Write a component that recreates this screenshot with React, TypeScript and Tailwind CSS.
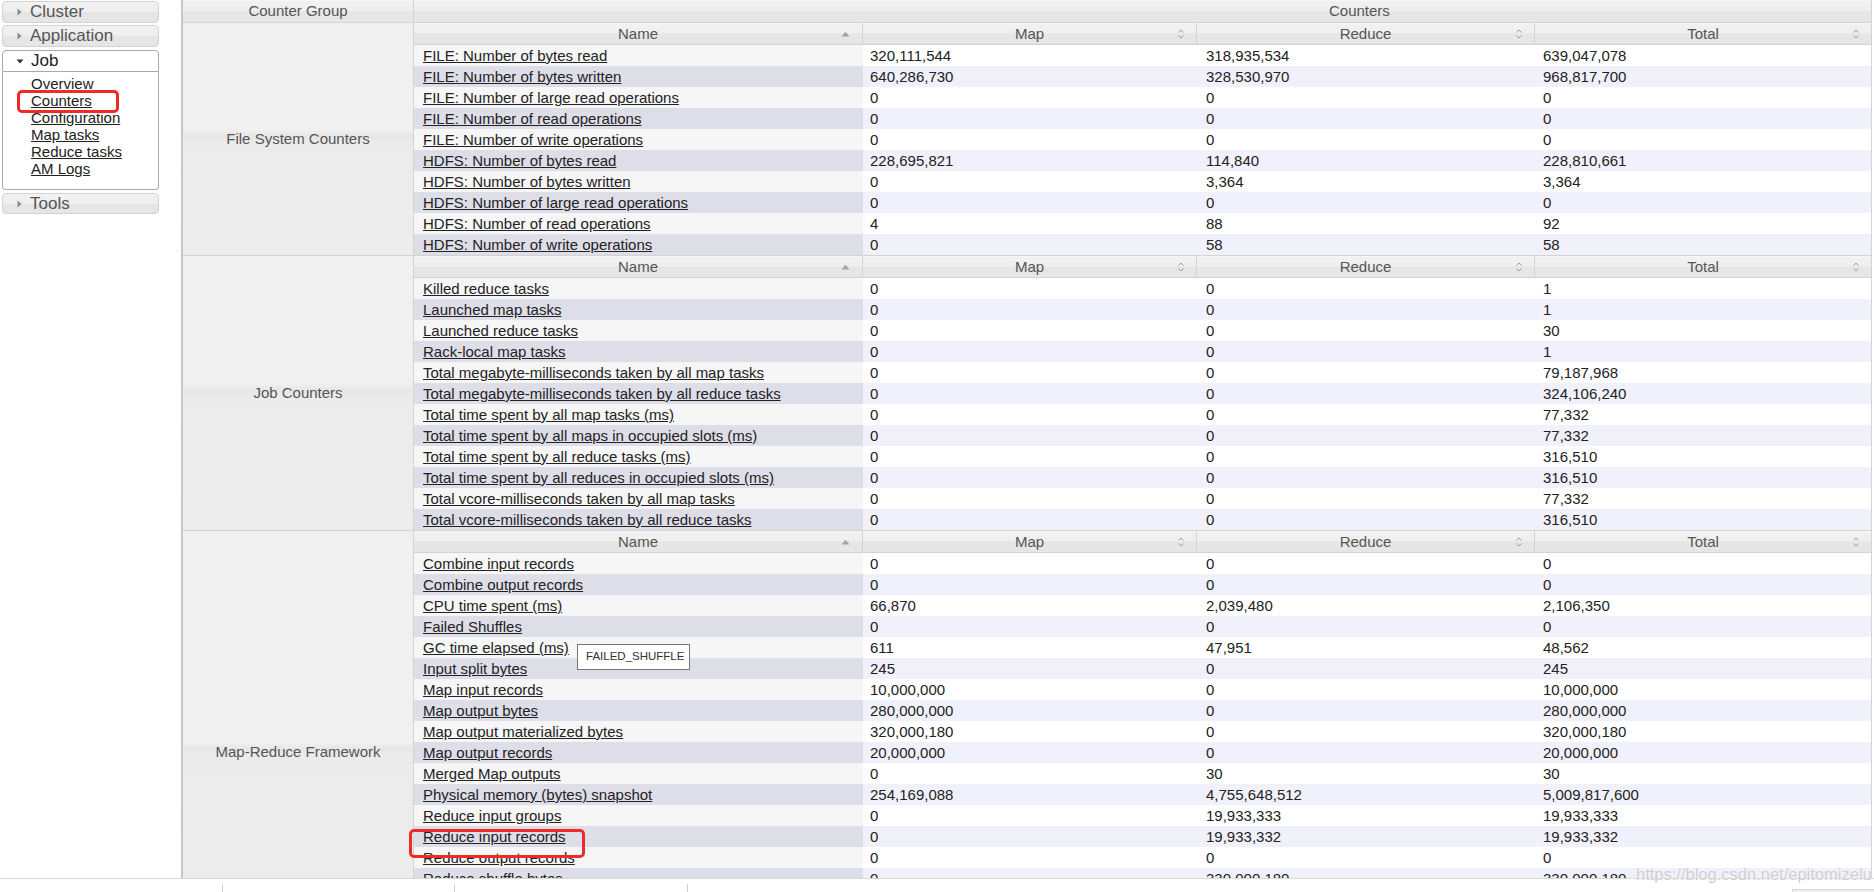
import React from "react";

type Row = [string, string, string, string];

const groups: { name: string; rows: Row[] }[] = [
  {
    name: "File System Counters",
    rows: [
      ["FILE: Number of bytes read", "320,111,544", "318,935,534", "639,047,078"],
      ["FILE: Number of bytes written", "640,286,730", "328,530,970", "968,817,700"],
      ["FILE: Number of large read operations", "0", "0", "0"],
      ["FILE: Number of read operations", "0", "0", "0"],
      ["FILE: Number of write operations", "0", "0", "0"],
      ["HDFS: Number of bytes read", "228,695,821", "114,840", "228,810,661"],
      ["HDFS: Number of bytes written", "0", "3,364", "3,364"],
      ["HDFS: Number of large read operations", "0", "0", "0"],
      ["HDFS: Number of read operations", "4", "88", "92"],
      ["HDFS: Number of write operations", "0", "58", "58"],
    ],
  },
  {
    name: "Job Counters",
    rows: [
      ["Killed reduce tasks", "0", "0", "1"],
      ["Launched map tasks", "0", "0", "1"],
      ["Launched reduce tasks", "0", "0", "30"],
      ["Rack-local map tasks", "0", "0", "1"],
      ["Total megabyte-milliseconds taken by all map tasks", "0", "0", "79,187,968"],
      ["Total megabyte-milliseconds taken by all reduce tasks", "0", "0", "324,106,240"],
      ["Total time spent by all map tasks (ms)", "0", "0", "77,332"],
      ["Total time spent by all maps in occupied slots (ms)", "0", "0", "77,332"],
      ["Total time spent by all reduce tasks (ms)", "0", "0", "316,510"],
      ["Total time spent by all reduces in occupied slots (ms)", "0", "0", "316,510"],
      ["Total vcore-milliseconds taken by all map tasks", "0", "0", "77,332"],
      ["Total vcore-milliseconds taken by all reduce tasks", "0", "0", "316,510"],
    ],
  },
  {
    name: "Map-Reduce Framework",
    rows: [
      ["Combine input records", "0", "0", "0"],
      ["Combine output records", "0", "0", "0"],
      ["CPU time spent (ms)", "66,870", "2,039,480", "2,106,350"],
      ["Failed Shuffles", "0", "0", "0"],
      ["GC time elapsed (ms)", "611", "47,951", "48,562"],
      ["Input split bytes", "245", "0", "245"],
      ["Map input records", "10,000,000", "0", "10,000,000"],
      ["Map output bytes", "280,000,000", "0", "280,000,000"],
      ["Map output materialized bytes", "320,000,180", "0", "320,000,180"],
      ["Map output records", "20,000,000", "0", "20,000,000"],
      ["Merged Map outputs", "0", "30", "30"],
      ["Physical memory (bytes) snapshot", "254,169,088", "4,755,648,512", "5,009,817,600"],
      ["Reduce input groups", "0", "19,933,333", "19,933,333"],
      ["Reduce input records", "0", "19,933,332", "19,933,332"],
      ["Reduce output records", "0", "0", "0"],
      ["Reduce shuffle bytes", "0", "330,000,180", "330,000,180"],
      ["Shuffled Maps", "0", "30", "30"],
      ["Spilled Records", "40,000,000", "19,933,332", "59,933,332"],
      ["Total committed heap usage (bytes)", "201,326,592", "3,640,655,872", "3,841,982,464"],
      ["Virtual memory (bytes) snapshot", "2,164,457,472", "64,861,143,040", "67,025,600,512"],
    ],
  },
];

const sideHead =
  "flex items-center h-[22px] rounded-[4px] border border-[#d3d3d3] bg-[linear-gradient(to_bottom,#f3f3f3_0%,#eeeeee_50%,#e4e4e4_50%,#e6e6e6_100%)] text-[17px] text-[#555] pl-[14px]";

const thGrad =
  "bg-[linear-gradient(to_bottom,#f8f8f8_0%,#f1f1f1_8%,#efefef_48%,#e6e6e6_52%,#e6e6e6_100%)]";

const RightTri = () => (
  <svg width="5" height="8" viewBox="0 0 5 8" className="mr-[8px]">
    <path d="M0.5 0.5 L4.5 4 L0.5 7.5 Z" fill="#8a8a8a" />
  </svg>
);

const SortBoth = () => (
  <svg width="8" height="12" viewBox="0 0 8 12" className="absolute right-[11px] top-[5px]">
    <path d="M1.5 4.5 L4 2 L6.5 4.5" fill="none" stroke="#9a9a9a" strokeWidth="1" />
    <path d="M1.5 7.5 L4 10 L6.5 7.5" fill="none" stroke="#9a9a9a" strokeWidth="1" />
  </svg>
);

const SortUp = () => (
  <svg width="9" height="6" viewBox="0 0 9 6" className="absolute right-[12px] top-[8px]">
    <path d="M0.5 5.5 L4.5 0.8 L8.5 5.5 Z" fill="#a4a4a4" />
  </svg>
);

const Sidebar = () => (
  <div className="w-[181px] shrink-0 pl-[2px] pt-px">
    <div className="w-[157px] flex flex-col">
      <div className={sideHead}>
        <RightTri />
        Cluster
      </div>
      <div className={`${sideHead} mt-[2px]`}>
        <RightTri />
        Application
      </div>
      <div className="mt-[3px] flex items-center h-[22px] rounded-t-[4px] border border-[#aaaaaa] bg-white text-[17px] text-[#212121] pl-[13px]">
        <svg width="8" height="5" viewBox="0 0 8 5" className="mr-[7px]">
          <path d="M0.5 0.5 L7.5 0.5 L4 4.5 Z" fill="#333" />
        </svg>
        Job
      </div>
      <div className="h-[118px] border border-t-0 border-[#aaaaaa] rounded-b-[4px] bg-white pl-[28px] pt-[3px] flex flex-col text-[15px] leading-[17px] text-[#222]">
        {["Overview", "Counters", "Configuration", "Map tasks", "Reduce tasks", "AM Logs"].map((l) => (
          <a key={l} className="underline w-fit">
            {l}
          </a>
        ))}
      </div>
      <div className={`${sideHead} !h-[21px] mt-[3px]`}>
        <RightTri />
        Tools
      </div>
    </div>
  </div>
);

const cols = "grid grid-cols-[449px_334px_338px_1fr]";

const Group = ({ name, rows, first }: { name: string; rows: Row[]; first: boolean }) => (
  <div className={`flex shrink-0 ${first ? "" : "border-t border-[#d3d3d3]"}`}>
    <div className="w-[231px] shrink-0 border-r border-[#d3d3d3] flex items-center justify-center text-[#555] bg-[linear-gradient(to_bottom,#f0f0f0_0%,#f0f0f0_calc(50%_-_9px),#e6e6e6_calc(50%_-_3px),#ebebeb_calc(50%_+_3px),#ededed_100%)]">
      {name}
    </div>
    <div className="flex-1 flex flex-col border-r border-[#d3d3d3]">
      <div className={`${cols} h-[22px] ${thGrad} border-b border-[#d3d3d3] text-[#555]`}>
        <div className="relative border-r border-[#d3d3d3] text-center leading-[21px]">
          Name
          <SortUp />
        </div>
        <div className="relative border-r border-[#d3d3d3] text-center leading-[21px]">
          Map
          <SortBoth />
        </div>
        <div className="relative border-r border-[#d3d3d3] text-center leading-[21px]">
          Reduce
          <SortBoth />
        </div>
        <div className="relative text-center leading-[21px]">
          Total
          <SortBoth />
        </div>
      </div>
      {rows.map((r, i) => {
        const odd = i % 2 === 0;
        return (
          <div key={r[0]} className={`${cols} h-[21px] leading-[21px] text-[#222] ${odd ? "bg-white" : "bg-[#f1f1fb]"}`}>
            <div className={`pl-[9px] whitespace-nowrap ${odd ? "bg-[#f6f6f6]" : "bg-[#dedee9]"}`}>
              <a className="underline">{r[0]}</a>
            </div>
            <div className="pl-[7px]">{r[1]}</div>
            <div className="pl-[9px]">{r[2]}</div>
            <div className="pl-[8px]">{r[3]}</div>
          </div>
        );
      })}
    </div>
  </div>
);

export default function App() {
  return (
    <div className="relative w-full h-[892px] overflow-hidden bg-white font-['Liberation_Sans',Arial,sans-serif] text-[15px]">
      <div className="flex h-[878px]">
        <Sidebar />
        <div className="flex-1 mr-[2px] border-l-2 border-[#c6c6c6] flex flex-col overflow-hidden">
          <div className={`flex shrink-0 h-[23px] border-b border-[#d3d3d3] text-[#555] ${thGrad}`}>
            <div className="w-[231px] shrink-0 border-r border-[#d3d3d3] text-center leading-[22px]">Counter Group</div>
            <div className="flex-1 pl-[915px] leading-[22px] border-r border-[#d3d3d3]">Counters</div>
          </div>
          {groups.map((g, i) => (
            <Group key={g.name} name={g.name} rows={g.rows} first={i === 0} />
          ))}
        </div>
      </div>

      <div className="h-[14px] border-t border-[#d8d8d8] flex items-end">
        <div className="w-[222px]" />
        <div className="w-px h-[8px] bg-[#cfcfcf]" />
        <div className="w-[231px]" />
        <div className="w-px h-[8px] bg-[#cfcfcf]" />
        <div className="w-[232px]" />
        <div className="w-px h-[8px] bg-[#cfcfcf]" />
        <div className="ml-auto w-[82px] h-[3px] bg-[#eeeeee] border-t border-l border-[#d5d5d5]" />
      </div>

      {/* annotations */}
      <div className="absolute left-[17px] top-[90px] w-[102px] h-[23px] border-[3px] border-[#ee2b26] rounded-[5px]" />
      <div className="absolute left-[409px] top-[829px] w-[176px] h-[29px] border-[3px] border-[#ee2b26] rounded-[5px]" />
      <div className="absolute left-[577px] top-[644px] w-[113px] h-[26px] border border-[#767676] bg-white flex items-center pl-[8px] text-[11.5px] text-[#333]">
        FAILED_SHUFFLE
      </div>
      <div className="absolute left-[1636px] top-[862px] text-[16.5px] text-[#cfcfcf] [text-shadow:0_0_1px_#fff]">
        https://blog.csdn.net/epitomizelu
      </div>
    </div>
  );
}
